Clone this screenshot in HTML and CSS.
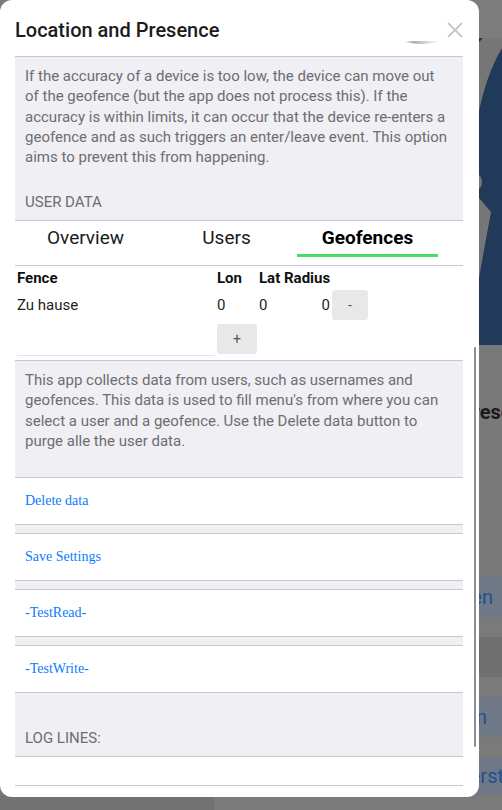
FILE: index.html
```html
<!DOCTYPE html>
<html>
<head>
<meta charset="utf-8">
<title>Location and Presence</title>
<link rel="stylesheet" href="styles.css">
</head>
<body>
<div class="page">
  <div class="bg-top"></div>
  <div class="bg-hero">
    <svg class="hero-art" width="502" height="307" viewBox="0 38 502 307">
      <path d="M483,38 L502,38 L502,48 Q486,75 478,116 L470,116 L470,50 Q478,44 483,38 Z" fill="#767676"/>
      <ellipse cx="478" cy="182" rx="4" ry="7" fill="#767676"/>
      <path d="M470,198 L479,198 L491,212 L484,250 L479,278 L470,278 Z" fill="#767676"/>
    </svg>
  </div>
  <div class="bg-main">
    <div class="bg-heading"><span>Presence</span></div>
    <div class="bg-box bg-box-first"><span>Optionen</span></div>
    <div class="bg-band"></div>
    <div class="bg-band bg-band-dark"></div>
    <div class="bg-band"></div>
    <div class="bg-box bg-box-second"><span>Anmelden</span></div>
    <div class="bg-gap"></div>
    <div class="bg-box bg-box-third"><span>Zuerst</span></div>
    <div class="bg-footer"></div>
  </div>
</div>

<div class="modal">
  <div class="modal-header">
    <h1 class="modal-title">Location and Presence</h1>
    <svg class="close-icon" width="16" height="16" viewBox="0 0 16 16">
      <path d="M1 1 L15 15 M15 1 L1 15" stroke="#c7c7cc" stroke-width="1.8" fill="none"/>
    </svg>
  </div>
  <div class="toggle-peek"></div>

  <div class="modal-body">
    <div class="block block-top">
      <p>If the accuracy of a device is too low, the device can move out of the geofence (but the app does not process this). If the accuracy is within limits, it can occur that the device re-enters a geofence and as such triggers an enter/leave event. This option aims to prevent this from happening.</p>
      <div class="block-title">User data</div>
    </div>

    <div class="tabs">
      <div class="tab">Overview</div>
      <div class="tab">Users</div>
      <div class="tab tab-active">Geofences</div>
    </div>

    <div class="fence-table">
      <div class="th">Fence</div>
      <div class="th">Lon</div>
      <div class="th">Lat</div>
      <div class="th">Radius</div>
      <div></div>

      <div class="td">Zu hause</div>
      <div class="td">0</div>
      <div class="td">0</div>
      <div class="td td-num">0</div>
      <button class="btn">-</button>

      <div class="td-input"></div>
      <button class="btn btn-add">+</button>
    </div>

    <div class="block">
      <p>This app collects data from users, such as usernames and geofences. This data is used to fill menu's from where you can select a user and a geofence. Use the Delete data button to purge alle the user data.</p>
    </div>

    <div class="actions">
      <div class="action">Delete data</div>
      <div class="action">Save Settings</div>
      <div class="action">-TestRead-</div>
      <div class="action">-TestWrite-</div>
    </div>

    <div class="block block-log">
      <div class="block-title">Log lines:</div>
    </div>
    <div class="log-output"></div>
  </div>
  <div class="scrollbar"></div>
</div>
</body>
</html>
```

FILE: styles.css
```css
html, body {
  margin: 0;
  padding: 0;
}

body {
  width: 502px;
  height: 810px;
  overflow: hidden;
  background: #787878;
  font-family: Roboto, "Liberation Sans", sans-serif;
  position: relative;
}

/* ---- dimmed page behind the dialog ---- */
.page {
  width: 502px;
  height: 810px;
  display: flex;
  flex-direction: column;
  overflow: hidden;
}

.bg-top {
  height: 38px;
  background: #7c7c7c;
}

.bg-hero {
  height: 307px;
  background: #213a5a;
  overflow: hidden;
}

.hero-art {
  display: block;
}

.bg-main {
  flex: 1;
  display: flex;
  flex-direction: column;
  background: #797979;
}

.bg-heading {
  display: flex;
  justify-content: flex-end;
  padding-top: 55px;
  height: 24px;
  margin-bottom: 153px;
  font-weight: 700;
  font-size: 20px;
  line-height: 24px;
  color: #1b1b1b;
  white-space: nowrap;
}

.bg-heading span {
  margin-right: -42px;
}

.bg-box {
  display: flex;
  justify-content: flex-end;
  align-items: center;
  background: #6f7886;
  color: #1f4f8f;
  font-size: 20px;
  line-height: 24px;
  white-space: nowrap;
}

.bg-box-first {
  height: 40px;
}

.bg-box-first span {
  margin-right: 9px;
}

.bg-box-second {
  height: 40px;
}

.bg-box-second span {
  margin-right: 15px;
}

.bg-box-third {
  height: 38px;
}

.bg-box-third span {
  margin-right: -2px;
}

.bg-band {
  height: 20px;
  background: #7a7a7a;
}

.bg-band-dark {
  height: 40px;
  background: #6f6f6f;
}

.bg-gap {
  height: 20px;
  background: #7a7a7a;
}

.bg-footer {
  flex: 1;
  background: linear-gradient(to right, #727272 214px, #7a7a7a 214px);
}

/* ---- dialog ---- */
.modal {
  position: absolute;
  left: 0;
  top: 0;
  width: 479px;
  height: 797px;
  background: #ffffff;
  border-radius: 12px;
  overflow: hidden;
}

.modal-header {
  display: flex;
  justify-content: space-between;
  align-items: flex-start;
  margin: 0 16px 0 15px;
  padding-top: 18px;
  height: 38px;
  border-bottom: 1px solid #c8c7cc;
}

.modal-title {
  margin: 0;
  font-size: 20px;
  line-height: 24px;
  font-weight: 500;
  color: #1c1c1c;
}

.close-icon {
  display: block;
  margin-top: 4px;
}

.toggle-peek {
  position: absolute;
  left: 405px;
  top: 41px;
  width: 33px;
  height: 3px;
  border-radius: 0 0 50% 50% / 0 0 100% 100%;
  background: linear-gradient(to right, rgba(0,0,0,0.04), rgba(0,0,0,0.32) 25%, rgba(0,0,0,0.14) 70%, rgba(0,0,0,0.02));
}

.modal-body {
  margin: 0 16px 0 15px;
}

.block {
  background: #efeff4;
  padding: 9px 12px 8px 10px;
  border-bottom: 1px solid #c8c7cc;
  color: #6d6d72;
  font-size: 15px;
  line-height: 20.25px;
}

.block p {
  margin: 0 0 18px;
}

.block-top p {
  margin-bottom: 24.5px;
}

.block-title {
  text-transform: uppercase;
}

.block-log {
  padding-top: 35px;
}

/* tabs */
.tabs {
  display: flex;
  padding-bottom: 8px;
  border-bottom: 1px solid #c8c7cc;
  background: #ffffff;
}

.tab {
  width: 141px;
  padding: 5px 0 4px;
  line-height: 24px;
  font-size: 19px;
  text-align: center;
  color: #1a1a1a;
  border-bottom: 3px solid transparent;
}

.tab-active {
  font-weight: 700;
  color: #000000;
  border-bottom-color: #4cd964;
}

/* geofence table */
.fence-table {
  display: grid;
  grid-template-columns: 198px 40px 23px 46px 36px;
  grid-template-rows: 20px 30px 34px;
  column-gap: 2px;
  row-gap: 2px;
  padding: 2px 0 4px 2px;
  border-bottom: 1px solid #c8c7cc;
  font-size: 15px;
  line-height: 20px;
  color: #1e1e1e;
}

.th {
  font-weight: 700;
  color: #111111;
}

.td {
  align-self: center;
}

.td-num {
  text-align: right;
}

.td-input {
  border-bottom: 1px solid #e4e4e4;
}

.btn {
  border: none;
  border-radius: 3px;
  background: #e8e8e8;
  color: #555555;
  font-family: Roboto, "Liberation Sans", sans-serif;
  font-size: 14px;
  padding: 0;
  height: 30px;
}

.btn-add {
  margin-top: 2px;
}

/* action rows */
.actions {
  background: #efeff4;
}

.action {
  height: 46px;
  display: flex;
  align-items: center;
  padding-left: 10px;
  background: #ffffff;
  border-bottom: 1px solid #c8c7cc;
  font-family: "Liberation Serif", serif;
  font-size: 14px;
  color: #0a7aff;
}

.action + .action {
  margin-top: 8px;
  border-top: 1px solid #c8c7cc;
}

.log-output {
  height: 28px;
  border-bottom: 1px solid #c8c7cc;
}

.scrollbar {
  position: absolute;
  left: 474px;
  top: 347px;
  width: 2px;
  height: 400px;
  border-radius: 1px;
  background: #8e8e8e;
}
```
